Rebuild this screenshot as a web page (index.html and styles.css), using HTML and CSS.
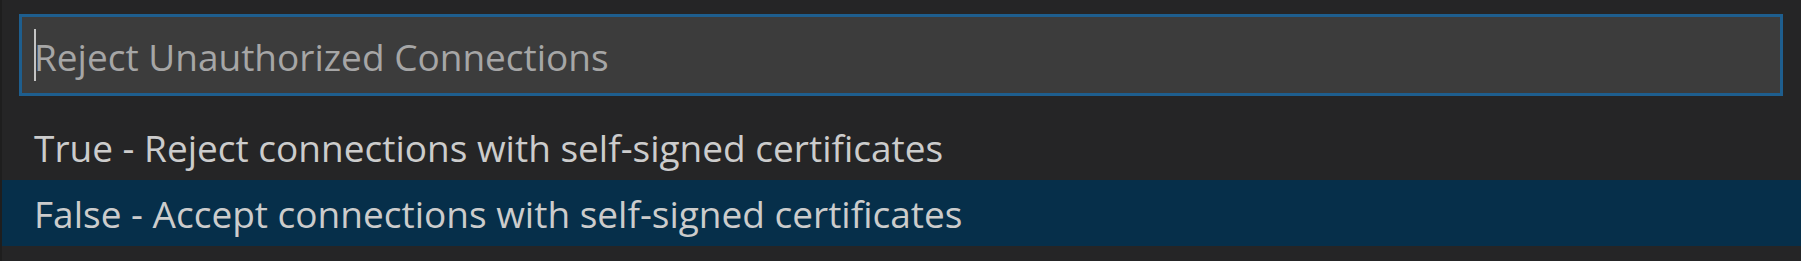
FILE: index.html
```html
<!DOCTYPE html>
<html lang="en">
<head>
<meta charset="utf-8">
<title>Quick Pick</title>
<link rel="stylesheet" href="styles.css">
</head>
<body>
<div class="quick-input">
  <div class="input-box">
    <span class="caret"></span>
    <span class="placeholder">Reject Unauthorized Connections</span>
  </div>
  <ul class="list">
    <li class="item">True - Reject connections with self-signed certificates</li>
    <li class="item item-focused">False - Accept connections with self-signed certificates</li>
  </ul>
</div>
</body>
</html>
```

FILE: styles.css
```css
html, body {
  margin: 0;
  padding: 0;
  background: #252526;
  width: 1801px;
  height: 261px;
  overflow: hidden;
}

.quick-input {
  box-sizing: border-box;
  height: 261px;
  border-left: 2px solid #1e1e1e;
  padding-top: 14px;
  font-family: "Open Sans", "Noto Sans", sans-serif;
  font-size: 37px;
  color: #cccccc;
}

.input-box {
  box-sizing: border-box;
  height: 82px;
  margin: 0 18px 0 17px;
  border: 3px solid #1e5e8e;
  background: #3c3c3c;
  padding: 0 12px;
  display: flex;
  align-items: center;
}

.caret {
  flex: none;
  width: 2px;
  height: 52px;
  margin-right: -2px;
  background: #c4c4c4;
}

.placeholder {
  color: #a6a6a6;
  line-height: 76px;
  padding-top: 3px;
}

.list {
  list-style: none;
  margin: 18px 0 0 0;
  padding: 0;
}

.item {
  height: 66px;
  line-height: 66px;
  padding: 1px 0 0 32px;
  box-sizing: border-box;
  white-space: nowrap;
}

.item-focused {
  background: #062f4a;
}
```
